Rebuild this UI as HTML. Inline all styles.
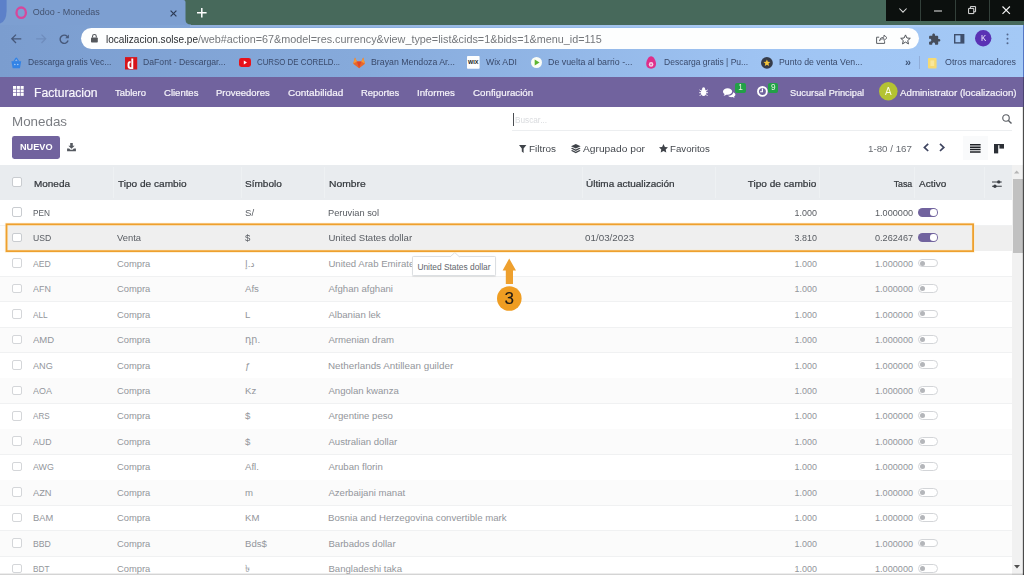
<!DOCTYPE html>
<html lang="es"><head><meta charset="utf-8"><title>Odoo - Monedas</title>
<style>html,body{margin:0;padding:0}html{width:1024px;height:575px;overflow:hidden}body{filter:blur(0.4px);width:1024px;height:575px;overflow:hidden;position:relative;background:#fff;font-family:"Liberation Sans","DejaVu Sans",sans-serif;}svg{display:block;overflow:visible}</style></head>
<body>
<div style="position:absolute;left:0px;top:0px;width:1024px;height:25px;background:#47695b;"></div>
<div style="position:absolute;left:0px;top:24.5px;width:1024px;height:52px;background:linear-gradient(90deg,#7b9dcf 0%,#86aadb 35%,#9fc4f3 75%,#a4c9f6 100%);"></div>
<div style="position:absolute;left:190px;top:25px;width:834px;height:2px;background:rgba(255,255,255,0.13);"></div>
<svg style="position:absolute;left:0px;top:0px;" width="192" height="25" viewBox="0 0 192 25"><path d="M0 0H183.5Q185.5 0 185.5 2V19.5Q185.5 24.6 191 24.6V25H0Z" fill="#7d9fd1"/><path d="M0 0H6.6V11Q6.4 21.5 0 23.6Z" fill="#5c80c9"/></svg>
<svg style="position:absolute;left:14.5px;top:5.5px;" width="12.5" height="13.5" viewBox="0 0 12.5 13.5"><ellipse cx="6.2" cy="6.7" rx="4.7" ry="5.2" fill="none" stroke="#d6489c" stroke-width="2.3"/></svg>
<svg style="position:absolute;left:170px;top:9.5px;" width="7" height="7" viewBox="0 0 7 7"><path d="M0.6 0.6L6.4 6.4M6.4 0.6L0.6 6.4" stroke="#2d3b55" stroke-width="1.2" fill="none"/></svg>
<svg style="position:absolute;left:197.3px;top:7.7px;" width="9.6" height="9.6" viewBox="0 0 9.6 9.6"><path d="M4.8 0V9.6M0 4.8H9.6" stroke="#fff" stroke-width="1.5" fill="none"/></svg>
<div style="position:absolute;left:886px;top:0px;width:138px;height:21px;background:#0c100e;"></div>
<div style="position:absolute;left:920.3px;top:0px;width:1px;height:21px;background:#33403a;"></div>
<div style="position:absolute;left:954.6px;top:0px;width:1px;height:21px;background:#33403a;"></div>
<div style="position:absolute;left:989px;top:0px;width:1px;height:21px;background:#33403a;"></div>
<svg style="position:absolute;left:899px;top:8.2px;" width="8" height="5" viewBox="0 0 8 5"><path d="M0.4 0.5L4 4.2L7.6 0.5" stroke="#dcdcdc" stroke-width="1.05" fill="none"/></svg>
<svg style="position:absolute;left:934px;top:10px;" width="8" height="2" viewBox="0 0 8 2"><path d="M0 1H8" stroke="#e2e2e2" stroke-width="1.05"/></svg>
<svg style="position:absolute;left:968px;top:6.3px;" width="8.2" height="8.2" viewBox="0 0 8.2 8.2"><path d="M0.6 2.4H5.8V7.6H0.6ZM2.4 2.4V0.6H7.6V5.8H5.8" stroke="#e2e2e2" stroke-width="1" fill="none"/></svg>
<svg style="position:absolute;left:1002.4px;top:6.4px;" width="8.4" height="8.4" viewBox="0 0 8.4 8.4"><path d="M0.5 0.5L7.9 7.9M7.9 0.5L0.5 7.9" stroke="#f4f4f4" stroke-width="1.15" fill="none"/></svg>
<svg style="position:absolute;left:11px;top:34px;" width="10.5" height="9.6" viewBox="0 0 10.5 9.6"><path d="M10.3 4.8H1M5 0.6L0.8 4.8L5 9" stroke="#46587a" stroke-width="1.3" fill="none"/></svg>
<svg style="position:absolute;left:35.5px;top:34px;" width="10.5" height="9.6" viewBox="0 0 10.5 9.6"><path d="M0.2 4.8H9.5M5.5 0.6L9.7 4.8L5.5 9" stroke="#6f8dbd" stroke-width="1.3" fill="none"/></svg>
<svg style="position:absolute;left:59px;top:33.6px;" width="10.6" height="10.6" viewBox="0 0 10.6 10.6"><path d="M9.1 6.6A4.1 4.1 0 1 1 8.2 2.4" stroke="#46587a" stroke-width="1.4" fill="none"/><path d="M9.9 0.6V4.3H6.2Z" fill="#46587a"/></svg>
<div style="position:absolute;left:80.5px;top:28px;width:838.5px;height:20.8px;background:#fdfefe;border-radius:10.4px;"></div>
<svg style="position:absolute;left:90.8px;top:34.2px;" width="6.8" height="8.6" viewBox="0 0 6.8 8.6"><rect x="0" y="3.4" width="6.8" height="5.2" rx="0.8" fill="#55585c"/><path d="M1.5 3.6V2.4A1.9 1.9 0 0 1 5.3 2.4V3.6" stroke="#55585c" stroke-width="1.1" fill="none"/></svg>
<svg style="position:absolute;left:876px;top:34.3px;" width="11.5" height="10" viewBox="0 0 11.5 10"><path d="M3.2 3.2H0.6V9.4H8.6V7.2" stroke="#5b5f64" stroke-width="1" fill="none"/><path d="M3.4 6.8Q3.8 3.2 8 3.1V1L11 3.8L8 6.6V4.6Q5 4.6 3.4 6.8Z" stroke="#5b5f64" stroke-width="0.9" fill="none"/></svg>
<svg style="position:absolute;left:900px;top:34px;" width="11" height="10.5" viewBox="0 0 11 10.5"><path d="M5.5 0.9L6.9 4L10.3 4.3L7.7 6.6L8.5 9.9L5.5 8.1L2.5 9.9L3.3 6.6L0.7 4.3L4.1 4Z" stroke="#4f5358" stroke-width="1" fill="none" stroke-linejoin="round"/></svg>
<svg style="position:absolute;left:928.3px;top:33.4px;" width="12.9" height="12.9" viewBox="0 0 24 24"><path d="M20.5 11H19V7c0-1.1-.9-2-2-2h-4V3.500C13 2.120 11.880 1 10.500 1S8 2.120 8 3.500V5H4c-1.100 0-1.990.9-1.990 2v3.800H3.500c1.490 0 2.700 1.210 2.700 2.700s-1.210 2.700-2.700 2.700H2V20c0 1.100.9 2 2 2h3.800v-1.500c0-1.490 1.210-2.700 2.700-2.700 1.490 0 2.700 1.210 2.700 2.700V22H17c1.100 0 2-.9 2-2v-4h1.500c1.380 0 2.500-1.120 2.500-2.500S21.880 11 20.500 11z" fill="#454c5a"/></svg>
<svg style="position:absolute;left:954px;top:34px;" width="10.4" height="9.6" viewBox="0 0 10.4 9.6"><rect x="0.7" y="0.7" width="9" height="8.2" stroke="#3f4f6c" stroke-width="1.4" fill="none"/><rect x="6.4" y="0.7" width="3.3" height="8.2" fill="#3f4f6c"/></svg>
<svg style="position:absolute;left:975px;top:30.2px;" width="16.4" height="16.4" viewBox="0 0 16.4 16.4"><circle cx="8.2" cy="8.2" r="8.2" fill="#5a31b4"/></svg>
<svg style="position:absolute;left:1006.2px;top:33px;" width="3" height="12" viewBox="0 0 3 12"><circle cx="1.5" cy="1.4" r="1" fill="#54678c"/><circle cx="1.5" cy="5.8" r="1" fill="#54678c"/><circle cx="1.5" cy="10.2" r="1" fill="#54678c"/></svg>
<svg style="position:absolute;left:11px;top:56.8px;" width="10.6" height="11.4" viewBox="0 0 10.8 11.4"><path d="M0.4 4.2H10.4L9.2 10.8Q9.1 11.4 8.5 11.4H2.3Q1.7 11.4 1.6 10.8Z" fill="#3283e6"/><path d="M2.2 4.6L4.6 0.9Q5.4 0 6.2 0.9L8.6 4.6Z" fill="#3283e6"/><path d="M4.1 4L5.4 2L6.7 4Z" fill="#8fb6ea"/><circle cx="3.9" cy="7.6" r="0.8" fill="#a9cbf5"/><circle cx="6.9" cy="7.6" r="0.8" fill="#a9cbf5"/></svg>
<svg style="position:absolute;left:124.8px;top:56.5px;" width="12.2" height="12.6" viewBox="0 0 12.2 12.4"><rect width="12.2" height="12.4" fill="#d7141a"/><path d="M7.3 1.5V11H5.6Q3.5 11 3.5 8.9V6.9Q3.5 4.9 5.6 4.9" stroke="#fff" stroke-width="1.9" fill="none"/></svg>
<svg style="position:absolute;left:238.8px;top:58px;" width="12" height="9" viewBox="0 0 12 9"><rect width="12" height="9" rx="2.4" fill="#e8121a"/><path d="M4.8 2.5L8 4.5L4.8 6.5Z" fill="#fff"/></svg>
<svg style="position:absolute;left:353px;top:57px;" width="12.2" height="11.2" viewBox="0 0 12.2 11.2"><path d="M6.1 11.2L0.2 6.8L2 0.4L3.9 4.6H8.3L10.2 0.4L12 6.8Z" fill="#e8662c"/><path d="M6.1 11.2L3.9 4.6H8.3Z" fill="#e2432a"/><path d="M0.2 6.8L2 0.4L3.9 4.6ZM12 6.8L10.2 0.4L8.3 4.6Z" fill="#f39a3a"/></svg>
<svg style="position:absolute;left:467.4px;top:56.2px;" width="12.6" height="12.8" viewBox="0 0 12.6 12.8"><rect width="12.6" height="12.8" rx="0.8" fill="#fdfefe"/><text x="6.3" y="8.3" font-size="5" font-weight="700" text-anchor="middle" fill="#161616" font-family="Liberation Sans,sans-serif" textLength="10.4" lengthAdjust="spacingAndGlyphs">WIX</text></svg>
<svg style="position:absolute;left:530.5px;top:57px;" width="11" height="11" viewBox="0 0 11 11"><circle cx="5.5" cy="5.5" r="5.5" fill="#fbfdf6"/><path d="M3.7 2.6L8.6 5.5L3.7 8.4Z" fill="#5cb531"/></svg>
<svg style="position:absolute;left:646.2px;top:56px;" width="10.2" height="12.8" viewBox="0 0 10.2 12.8"><path d="M5.1 0.3C7.9 0.3 10 4.9 10 8.1C10 11 8 12.7 5.1 12.7C2.2 12.7 0.2 11 0.2 8.1C0.2 4.9 2.3 0.3 5.1 0.3Z" fill="#df2e8a"/><circle cx="5.1" cy="8.4" r="2.3" fill="#f6cfe4"/><circle cx="5.1" cy="8.4" r="0.9" fill="#e45aa2"/></svg>
<svg style="position:absolute;left:760.8px;top:56.6px;" width="11.8" height="11.8" viewBox="0 0 11.8 11.8"><circle cx="5.9" cy="5.9" r="5.9" fill="#363c4a"/><path d="M5.9 2.5L6.9 4.8L9.3 5L7.5 6.6L8 9L5.9 7.7L3.8 9L4.3 6.6L2.5 5L4.9 4.8Z" fill="#f4c53a"/></svg>
<div style="position:absolute;left:919px;top:56px;width:1px;height:12.5px;background:#90add9;"></div>
<svg style="position:absolute;left:928.4px;top:57.5px;" width="8.6" height="10.4" viewBox="0 0 8.6 10.4"><rect width="8.6" height="10.4" rx="1" fill="#f6da73"/><rect x="2.4" y="2.4" width="3.8" height="5.6" fill="#f9e79c"/></svg>
<div style="position:absolute;left:0px;top:76.6px;width:1024px;height:30.1px;background:#71639e;"></div>
<svg style="position:absolute;left:13px;top:86.3px;" width="10.8" height="10" viewBox="0 0 10.8 10"><rect x="0.0" y="0.0" width="3.1" height="2.9" fill="#fff"/><rect x="3.8" y="0.0" width="3.1" height="2.9" fill="#fff"/><rect x="7.6" y="0.0" width="3.1" height="2.9" fill="#fff"/><rect x="0.0" y="3.5" width="3.1" height="2.9" fill="#fff"/><rect x="3.8" y="3.5" width="3.1" height="2.9" fill="#fff"/><rect x="7.6" y="3.5" width="3.1" height="2.9" fill="#fff"/><rect x="0.0" y="7.0" width="3.1" height="2.9" fill="#fff"/><rect x="3.8" y="7.0" width="3.1" height="2.9" fill="#fff"/><rect x="7.6" y="7.0" width="3.1" height="2.9" fill="#fff"/></svg>
<svg style="position:absolute;left:699.4px;top:86.8px;" width="9.2" height="9.4" viewBox="0 0 8.6 9.2"><ellipse cx="4.3" cy="5.4" rx="2.6" ry="3.4" fill="#fff"/><circle cx="4.3" cy="1.7" r="1.5" fill="#fff"/><path d="M0.3 2.8L2 4M8.3 2.8L6.6 4M0 5.6H8.6M0.4 8.8L2 7.2M8.2 8.8L6.6 7.2" stroke="#fff" stroke-width="0.9"/></svg>
<svg style="position:absolute;left:722.6px;top:87.6px;" width="12.4" height="9.8" viewBox="0 0 12.4 9.8"><path d="M4.6 0.2C7.1 0.2 9.2 1.6 9.2 3.5C9.2 5.4 7.1 6.8 4.6 6.8C4.1 6.8 3.7 6.8 3.3 6.7C2.5 7.4 1.5 7.7 0.5 7.8C1.1 7.2 1.4 6.6 1.5 6C0.6 5.4 0 4.5 0 3.5C0 1.6 2.1 0.2 4.6 0.2Z" fill="#fff"/><path d="M10.2 4.2C11.5 4.7 12.4 5.6 12.4 6.6C12.4 7.5 11.8 8.2 11 8.7C11.1 9.1 11.4 9.5 11.9 9.8C11 9.8 10.1 9.5 9.5 9.1C9.1 9.2 8.7 9.2 8.3 9.2C6.9 9.2 5.7 8.7 5 7.8C8 7.7 10.3 6.1 10.2 4.2Z" fill="#fff"/></svg>
<div style="position:absolute;left:735.3px;top:82.6px;width:10.4px;height:10.8px;background:#22a047;border-radius:2px;"></div>
<svg style="position:absolute;left:756.8px;top:86.2px;" width="10.8" height="10.8" viewBox="0 0 10 10"><circle cx="5" cy="5" r="4.1" stroke="#fff" stroke-width="1.7" fill="none"/><path d="M5 2.4V5.3H2.9" stroke="#fff" stroke-width="1.1" fill="none"/></svg>
<div style="position:absolute;left:768px;top:82.6px;width:10.4px;height:10.8px;background:#22a047;border-radius:2px;"></div>
<svg style="position:absolute;left:879px;top:82.4px;" width="18.6" height="18.6" viewBox="0 0 17.2 17.2"><circle cx="8.6" cy="8.6" r="8.6" fill="#b4c332"/></svg>
<div style="position:absolute;left:512px;top:129.8px;width:500px;height:1px;background:#eceef0;"></div>
<div style="position:absolute;left:512.6px;top:112.6px;width:1px;height:13.6px;background:#4a4d52;"></div>
<svg style="position:absolute;left:1002px;top:114.4px;" width="10" height="10" viewBox="0 0 10 10"><circle cx="4" cy="4" r="3.25" stroke="#5a5e64" stroke-width="1.15" fill="none"/><path d="M6.4 6.4L9.5 9.5" stroke="#5a5e64" stroke-width="1.4"/></svg>
<div style="position:absolute;left:12px;top:136.2px;width:47.6px;height:22.8px;background:#71639e;border-radius:2.4px;"></div>
<svg style="position:absolute;left:67.4px;top:143px;" width="9" height="8.3" viewBox="0 0 9.6 9"><path d="M3.4 0H6.2V3H8.2L4.8 6.3L1.4 3H3.4Z" fill="#555960"/><path d="M0 6H2.3L3.6 7.3H6L7.3 6H9.6V9H0Z" fill="#555960"/></svg>
<svg style="position:absolute;left:519.4px;top:144.6px;" width="7.4" height="8" viewBox="0 0 7.4 8"><path d="M0 0H7.4L4.6 3.6V8L2.8 6.6V3.6Z" fill="#3f4349"/></svg>
<svg style="position:absolute;left:570.6px;top:143.8px;" width="9.6" height="9.6" viewBox="0 0 9.6 9.6"><path d="M4.8 0L9.6 2.2L4.8 4.4L0 2.2Z" fill="#3f4349"/><path d="M1.2 3.8L0 4.5L4.8 6.9L9.6 4.5L8.4 3.8L4.8 5.5Z" fill="#3f4349"/><path d="M1.2 6.1L0 6.8L4.8 9.3L9.6 6.8L8.4 6.1L4.8 7.8Z" fill="#3f4349"/></svg>
<svg style="position:absolute;left:658.8px;top:144px;" width="9" height="8.6" viewBox="0 0 9 8.6"><path d="M4.5 0L5.9 2.9L9 3.3L6.7 5.4L7.3 8.6L4.5 7.1L1.7 8.6L2.3 5.4L0 3.3L3.1 2.9Z" fill="#3f4349"/></svg>
<svg style="position:absolute;left:923px;top:143px;" width="6.2" height="8.8" viewBox="0 0 6.2 8.8"><path d="M5.2 0.8L1.4 4.4L5.2 8" stroke="#3f4560" stroke-width="1.7" fill="none"/></svg>
<svg style="position:absolute;left:938.8px;top:143px;" width="6.2" height="8.8" viewBox="0 0 6.2 8.8"><path d="M1 0.8L4.8 4.4L1 8" stroke="#3f4560" stroke-width="1.7" fill="none"/></svg>
<div style="position:absolute;left:963px;top:136.2px;width:25px;height:23.6px;background:#f9fafb;"></div>
<svg style="position:absolute;left:970px;top:144px;" width="10.6" height="8.8" viewBox="0 0 10.6 8.8"><path d="M0 0.8H10.6M0 3.2H10.6M0 5.6H10.6M0 8H10.6" stroke="#1e2126" stroke-width="1.5"/></svg>
<svg style="position:absolute;left:994.2px;top:143.6px;" width="10" height="9.4" viewBox="0 0 10 9.4"><rect x="0" y="0" width="4.2" height="9.4" fill="#2c3036"/><rect x="5.4" y="0" width="4.6" height="4.6" fill="#2c3036"/><rect x="0" y="0" width="10" height="1.2" fill="#2c3036"/></svg>
<div style="position:absolute;left:0px;top:165px;width:1011.5px;height:35.3px;background:#e9ecef;"></div>
<div style="position:absolute;left:113px;top:167px;width:1px;height:31px;background:#eef1f3;"></div>
<div style="position:absolute;left:241px;top:167px;width:1px;height:31px;background:#eef1f3;"></div>
<div style="position:absolute;left:324px;top:167px;width:1px;height:31px;background:#eef1f3;"></div>
<div style="position:absolute;left:582px;top:167px;width:1px;height:31px;background:#eef1f3;"></div>
<div style="position:absolute;left:714.5px;top:167px;width:1px;height:31px;background:#eef1f3;"></div>
<div style="position:absolute;left:819px;top:167px;width:1px;height:31px;background:#eef1f3;"></div>
<div style="position:absolute;left:914px;top:167px;width:1px;height:31px;background:#eef1f3;"></div>
<div style="position:absolute;left:983.5px;top:167px;width:1px;height:31px;background:#eef1f3;"></div>
<div style="position:absolute;left:11.8px;top:177px;width:9.8px;height:9.6px;background:#fff;box-sizing:border-box;border:1px solid #c9ccd0;border-radius:2px;"></div>
<svg style="position:absolute;left:991.8px;top:179.5px;" width="9.8" height="8.2" viewBox="0 0 10 8.4"><path d="M0 2H10M0 6.4H10" stroke="#3a3e44" stroke-width="1.1"/><circle cx="6.9" cy="2" r="1.7" fill="#3a3e44"/><circle cx="3" cy="6.4" r="1.7" fill="#3a3e44"/></svg>
<div style="position:absolute;left:0px;top:200.3px;width:1011.5px;height:25.45px;background:#ffffff;"></div>
<div style="position:absolute;left:0px;top:225.05px;width:1011.5px;height:1px;background:#f0f1f2;"></div>
<div style="position:absolute;left:11.8px;top:207.4px;width:9.8px;height:9.6px;background:#fff;box-sizing:border-box;border:1px solid #c9ccd0;border-radius:2px;"></div>
<div style="position:absolute;left:918px;top:207.7px;width:20px;height:9.2px;background:#71639e;border-radius:4.6px;"></div>
<div style="position:absolute;left:930.4px;top:209.0px;width:6.4px;height:6.6px;background:#fff;border-radius:50%;"></div>
<div style="position:absolute;left:0px;top:225.75px;width:1011.5px;height:25.45px;background:#efefef;"></div>
<div style="position:absolute;left:0px;top:250.5px;width:1011.5px;height:1px;background:#e8e8e8;"></div>
<div style="position:absolute;left:0px;top:225.75px;width:5.5px;height:25.45px;background:#fdfdfd;"></div>
<div style="position:absolute;left:11.8px;top:232.85px;width:9.8px;height:9.6px;background:#fff;box-sizing:border-box;border:1px solid #c9ccd0;border-radius:2px;"></div>
<div style="position:absolute;left:918px;top:233.15px;width:20px;height:9.2px;background:#71639e;border-radius:4.6px;"></div>
<div style="position:absolute;left:930.4px;top:234.45px;width:6.4px;height:6.6px;background:#fff;border-radius:50%;"></div>
<div style="position:absolute;left:0px;top:251.2px;width:1011.5px;height:25.45px;background:#ffffff;"></div>
<div style="position:absolute;left:0px;top:275.95px;width:1011.5px;height:1px;background:#f0f1f2;"></div>
<div style="position:absolute;left:11.8px;top:258.3px;width:9.8px;height:9.6px;background:#fff;box-sizing:border-box;border:1px solid #d4d6d9;border-radius:2px;"></div>
<div style="position:absolute;left:918.2px;top:258.6px;width:19.4px;height:8.9px;background:#fff;box-sizing:border-box;border:1px solid #d3d5d8;border-radius:4.45px;"></div>
<div style="position:absolute;left:920.4px;top:260.55px;width:5px;height:5px;background:#b4b6ba;border-radius:50%;"></div>
<div style="position:absolute;left:0px;top:276.65px;width:1011.5px;height:25.45px;background:#fbfbfb;"></div>
<div style="position:absolute;left:0px;top:301.4px;width:1011.5px;height:1px;background:#f0f1f2;"></div>
<div style="position:absolute;left:11.8px;top:283.75px;width:9.8px;height:9.6px;background:#fff;box-sizing:border-box;border:1px solid #d4d6d9;border-radius:2px;"></div>
<div style="position:absolute;left:918.2px;top:284.05px;width:19.4px;height:8.9px;background:#fff;box-sizing:border-box;border:1px solid #d3d5d8;border-radius:4.45px;"></div>
<div style="position:absolute;left:920.4px;top:286.0px;width:5px;height:5px;background:#b4b6ba;border-radius:50%;"></div>
<div style="position:absolute;left:0px;top:302.1px;width:1011.5px;height:25.45px;background:#ffffff;"></div>
<div style="position:absolute;left:0px;top:326.85px;width:1011.5px;height:1px;background:#f0f1f2;"></div>
<div style="position:absolute;left:11.8px;top:309.2px;width:9.8px;height:9.6px;background:#fff;box-sizing:border-box;border:1px solid #d4d6d9;border-radius:2px;"></div>
<div style="position:absolute;left:918.2px;top:309.5px;width:19.4px;height:8.9px;background:#fff;box-sizing:border-box;border:1px solid #d3d5d8;border-radius:4.45px;"></div>
<div style="position:absolute;left:920.4px;top:311.45px;width:5px;height:5px;background:#b4b6ba;border-radius:50%;"></div>
<div style="position:absolute;left:0px;top:327.55px;width:1011.5px;height:25.45px;background:#fbfbfb;"></div>
<div style="position:absolute;left:0px;top:352.3px;width:1011.5px;height:1px;background:#f0f1f2;"></div>
<div style="position:absolute;left:11.8px;top:334.65px;width:9.8px;height:9.6px;background:#fff;box-sizing:border-box;border:1px solid #d4d6d9;border-radius:2px;"></div>
<div style="position:absolute;left:918.2px;top:334.95px;width:19.4px;height:8.9px;background:#fff;box-sizing:border-box;border:1px solid #d3d5d8;border-radius:4.45px;"></div>
<div style="position:absolute;left:920.4px;top:336.9px;width:5px;height:5px;background:#b4b6ba;border-radius:50%;"></div>
<div style="position:absolute;left:0px;top:353.0px;width:1011.5px;height:25.45px;background:#ffffff;"></div>
<div style="position:absolute;left:0px;top:377.75px;width:1011.5px;height:1px;background:#f0f1f2;"></div>
<div style="position:absolute;left:11.8px;top:360.1px;width:9.8px;height:9.6px;background:#fff;box-sizing:border-box;border:1px solid #d4d6d9;border-radius:2px;"></div>
<div style="position:absolute;left:918.2px;top:360.4px;width:19.4px;height:8.9px;background:#fff;box-sizing:border-box;border:1px solid #d3d5d8;border-radius:4.45px;"></div>
<div style="position:absolute;left:920.4px;top:362.35px;width:5px;height:5px;background:#b4b6ba;border-radius:50%;"></div>
<div style="position:absolute;left:0px;top:378.45px;width:1011.5px;height:25.45px;background:#fbfbfb;"></div>
<div style="position:absolute;left:0px;top:403.2px;width:1011.5px;height:1px;background:#f0f1f2;"></div>
<div style="position:absolute;left:11.8px;top:385.55px;width:9.8px;height:9.6px;background:#fff;box-sizing:border-box;border:1px solid #d4d6d9;border-radius:2px;"></div>
<div style="position:absolute;left:918.2px;top:385.85px;width:19.4px;height:8.9px;background:#fff;box-sizing:border-box;border:1px solid #d3d5d8;border-radius:4.45px;"></div>
<div style="position:absolute;left:920.4px;top:387.8px;width:5px;height:5px;background:#b4b6ba;border-radius:50%;"></div>
<div style="position:absolute;left:0px;top:403.9px;width:1011.5px;height:25.45px;background:#ffffff;"></div>
<div style="position:absolute;left:0px;top:428.65px;width:1011.5px;height:1px;background:#f0f1f2;"></div>
<div style="position:absolute;left:11.8px;top:411.0px;width:9.8px;height:9.6px;background:#fff;box-sizing:border-box;border:1px solid #d4d6d9;border-radius:2px;"></div>
<div style="position:absolute;left:918.2px;top:411.3px;width:19.4px;height:8.9px;background:#fff;box-sizing:border-box;border:1px solid #d3d5d8;border-radius:4.45px;"></div>
<div style="position:absolute;left:920.4px;top:413.25px;width:5px;height:5px;background:#b4b6ba;border-radius:50%;"></div>
<div style="position:absolute;left:0px;top:429.35px;width:1011.5px;height:25.45px;background:#fbfbfb;"></div>
<div style="position:absolute;left:0px;top:454.1px;width:1011.5px;height:1px;background:#f0f1f2;"></div>
<div style="position:absolute;left:11.8px;top:436.45px;width:9.8px;height:9.6px;background:#fff;box-sizing:border-box;border:1px solid #d4d6d9;border-radius:2px;"></div>
<div style="position:absolute;left:918.2px;top:436.75px;width:19.4px;height:8.9px;background:#fff;box-sizing:border-box;border:1px solid #d3d5d8;border-radius:4.45px;"></div>
<div style="position:absolute;left:920.4px;top:438.7px;width:5px;height:5px;background:#b4b6ba;border-radius:50%;"></div>
<div style="position:absolute;left:0px;top:454.8px;width:1011.5px;height:25.45px;background:#ffffff;"></div>
<div style="position:absolute;left:0px;top:479.55px;width:1011.5px;height:1px;background:#f0f1f2;"></div>
<div style="position:absolute;left:11.8px;top:461.9px;width:9.8px;height:9.6px;background:#fff;box-sizing:border-box;border:1px solid #d4d6d9;border-radius:2px;"></div>
<div style="position:absolute;left:918.2px;top:462.2px;width:19.4px;height:8.9px;background:#fff;box-sizing:border-box;border:1px solid #d3d5d8;border-radius:4.45px;"></div>
<div style="position:absolute;left:920.4px;top:464.15px;width:5px;height:5px;background:#b4b6ba;border-radius:50%;"></div>
<div style="position:absolute;left:0px;top:480.25px;width:1011.5px;height:25.45px;background:#fbfbfb;"></div>
<div style="position:absolute;left:0px;top:505.0px;width:1011.5px;height:1px;background:#f0f1f2;"></div>
<div style="position:absolute;left:11.8px;top:487.35px;width:9.8px;height:9.6px;background:#fff;box-sizing:border-box;border:1px solid #d4d6d9;border-radius:2px;"></div>
<div style="position:absolute;left:918.2px;top:487.65px;width:19.4px;height:8.9px;background:#fff;box-sizing:border-box;border:1px solid #d3d5d8;border-radius:4.45px;"></div>
<div style="position:absolute;left:920.4px;top:489.6px;width:5px;height:5px;background:#b4b6ba;border-radius:50%;"></div>
<div style="position:absolute;left:0px;top:505.7px;width:1011.5px;height:25.45px;background:#ffffff;"></div>
<div style="position:absolute;left:0px;top:530.45px;width:1011.5px;height:1px;background:#f0f1f2;"></div>
<div style="position:absolute;left:11.8px;top:512.8px;width:9.8px;height:9.6px;background:#fff;box-sizing:border-box;border:1px solid #d4d6d9;border-radius:2px;"></div>
<div style="position:absolute;left:918.2px;top:513.1px;width:19.4px;height:8.9px;background:#fff;box-sizing:border-box;border:1px solid #d3d5d8;border-radius:4.45px;"></div>
<div style="position:absolute;left:920.4px;top:515.05px;width:5px;height:5px;background:#b4b6ba;border-radius:50%;"></div>
<div style="position:absolute;left:0px;top:531.15px;width:1011.5px;height:25.45px;background:#fbfbfb;"></div>
<div style="position:absolute;left:0px;top:555.9px;width:1011.5px;height:1px;background:#f0f1f2;"></div>
<div style="position:absolute;left:11.8px;top:538.25px;width:9.8px;height:9.6px;background:#fff;box-sizing:border-box;border:1px solid #d4d6d9;border-radius:2px;"></div>
<div style="position:absolute;left:918.2px;top:538.55px;width:19.4px;height:8.9px;background:#fff;box-sizing:border-box;border:1px solid #d3d5d8;border-radius:4.45px;"></div>
<div style="position:absolute;left:920.4px;top:540.5px;width:5px;height:5px;background:#b4b6ba;border-radius:50%;"></div>
<div style="position:absolute;left:0px;top:556.6px;width:1011.5px;height:18.4px;background:#ffffff;"></div>
<div style="position:absolute;left:11.8px;top:563.7px;width:9.8px;height:9.6px;background:#fff;box-sizing:border-box;border:1px solid #d4d6d9;border-radius:2px;"></div>
<div style="position:absolute;left:918.2px;top:564.0px;width:19.4px;height:8.9px;background:#fff;box-sizing:border-box;border:1px solid #d3d5d8;border-radius:4.45px;"></div>
<div style="position:absolute;left:920.4px;top:565.95px;width:5px;height:5px;background:#b4b6ba;border-radius:50%;"></div>
<div style="position:absolute;left:1011.5px;top:165px;width:11px;height:410px;background:#f1f1f1;"></div>
<div style="position:absolute;left:1013px;top:179px;width:9.5px;height:74px;background:#c1c1c1;"></div>
<svg style="position:absolute;left:1014.4px;top:170px;" width="5.4" height="3.4" viewBox="0 0 5.4 3.4"><path d="M0 3.4L2.7 0.4L5.4 3.4Z" fill="#b5b5b5"/></svg>
<svg style="position:absolute;left:1014px;top:564.6px;" width="6" height="3.6" viewBox="0 0 6 3.6"><path d="M0 0L3 3.6L6 0Z" fill="#505050"/></svg>
<div style="position:absolute;left:1023px;top:77px;width:1px;height:30px;background:#4a4270;"></div>
<div style="position:absolute;left:1023px;top:107px;width:1px;height:468px;background:#4b4b4b;"></div>
<div style="position:absolute;left:1022px;top:107px;width:1px;height:468px;background:rgba(0,0,0,0.10);"></div>
<div style="position:absolute;left:1023px;top:25px;width:1px;height:52px;background:#5577c4;"></div>
<div style="position:absolute;left:0px;top:573px;width:1024px;height:1px;background:rgba(0,0,0,0.07);"></div>
<div style="position:absolute;left:0px;top:574px;width:1024px;height:1px;background:rgba(0,0,0,0.17);"></div>
<span style="position:absolute;top:7.98px;font-size:9px;line-height:9px;color:#445370;white-space:nowrap;left:32.8px;transform-origin:0 50%;">Odoo - Monedas</span>
<span style="position:absolute;top:33.61px;font-size:10.5px;line-height:10.5px;color:#2a2d31;white-space:nowrap;left:106.2px;transform-origin:0 50%;transform:scaleX(0.955);">localizacion.solse.pe</span>
<span style="position:absolute;top:33.61px;font-size:10.5px;line-height:10.5px;color:#74777b;white-space:nowrap;left:198.3px;transform-origin:0 50%;transform:scaleX(1.030);">/web#action=67&amp;model=res.currency&amp;view_type=list&amp;cids=1&amp;bids=1&amp;menu_id=115</span>
<span style="position:absolute;top:33.98px;font-size:9px;line-height:9px;color:#f4f0ff;white-space:nowrap;left:980.6px;transform-origin:0 50%;transform:scaleX(0.864);">K</span>
<span style="position:absolute;top:58.48px;font-size:9px;line-height:9px;color:#3a4a6b;white-space:nowrap;left:28.3px;transform-origin:0 50%;transform:scaleX(0.947);">Descarga gratis Vec...</span>
<span style="position:absolute;top:58.48px;font-size:9px;line-height:9px;color:#3a4a6b;white-space:nowrap;left:143.2px;transform-origin:0 50%;transform:scaleX(0.960);">DaFont - Descargar...</span>
<span style="position:absolute;top:58.48px;font-size:9px;line-height:9px;color:#3a4a6b;white-space:nowrap;left:257px;transform-origin:0 50%;transform:scaleX(0.874);">CURSO DE CORELD...</span>
<span style="position:absolute;top:58.48px;font-size:9px;line-height:9px;color:#3a4a6b;white-space:nowrap;left:371.2px;transform-origin:0 50%;transform:scaleX(0.974);">Brayan Mendoza Ar...</span>
<span style="position:absolute;top:58.48px;font-size:9px;line-height:9px;color:#3a4a6b;white-space:nowrap;left:486.2px;transform-origin:0 50%;transform:scaleX(0.962);">Wix ADI</span>
<span style="position:absolute;top:58.48px;font-size:9px;line-height:9px;color:#3a4a6b;white-space:nowrap;left:548px;transform-origin:0 50%;transform:scaleX(0.982);">De vuelta al barrio -...</span>
<span style="position:absolute;top:58.48px;font-size:9px;line-height:9px;color:#3a4a6b;white-space:nowrap;left:663.8px;transform-origin:0 50%;transform:scaleX(0.947);">Descarga gratis | Pu...</span>
<span style="position:absolute;top:58.48px;font-size:9px;line-height:9px;color:#3a4a6b;white-space:nowrap;left:778.8px;transform-origin:0 50%;transform:scaleX(0.969);">Punto de venta Ven...</span>
<span style="position:absolute;top:57.73px;font-size:10px;line-height:10px;color:#3f5578;white-space:nowrap;font-weight:700;left:905px;transform-origin:0 50%;transform:scaleX(1.079);">»</span>
<span style="position:absolute;top:58.48px;font-size:9px;line-height:9px;color:#3a4a6b;white-space:nowrap;left:945px;transform-origin:0 50%;transform:scaleX(0.986);">Otros marcadores</span>
<span style="position:absolute;top:86.50px;font-size:12.4px;line-height:12.4px;color:#f8f6fc;white-space:nowrap;left:33.6px;transform-origin:0 50%;transform:scaleX(0.982);-webkit-text-stroke:0.2px #f8f6fc;">Facturacion</span>
<span style="position:absolute;top:87.70px;font-size:9.8px;line-height:9.8px;color:#f6f4fa;white-space:nowrap;left:115.4px;transform-origin:0 50%;transform:scaleX(0.965);-webkit-text-stroke:0.2px #f6f4fa;">Tablero</span>
<span style="position:absolute;top:87.70px;font-size:9.8px;line-height:9.8px;color:#f6f4fa;white-space:nowrap;left:164.4px;transform-origin:0 50%;transform:scaleX(0.972);-webkit-text-stroke:0.2px #f6f4fa;">Clientes</span>
<span style="position:absolute;top:87.70px;font-size:9.8px;line-height:9.8px;color:#f6f4fa;white-space:nowrap;left:216.4px;transform-origin:0 50%;transform:scaleX(0.968);-webkit-text-stroke:0.2px #f6f4fa;">Proveedores</span>
<span style="position:absolute;top:87.70px;font-size:9.8px;line-height:9.8px;color:#f6f4fa;white-space:nowrap;left:287.8px;transform-origin:0 50%;transform:scaleX(1.017);-webkit-text-stroke:0.2px #f6f4fa;">Contabilidad</span>
<span style="position:absolute;top:87.70px;font-size:9.8px;line-height:9.8px;color:#f6f4fa;white-space:nowrap;left:360.8px;transform-origin:0 50%;transform:scaleX(0.961);-webkit-text-stroke:0.2px #f6f4fa;">Reportes</span>
<span style="position:absolute;top:87.70px;font-size:9.8px;line-height:9.8px;color:#f6f4fa;white-space:nowrap;left:417px;transform-origin:0 50%;transform:scaleX(0.991);-webkit-text-stroke:0.2px #f6f4fa;">Informes</span>
<span style="position:absolute;top:87.70px;font-size:9.8px;line-height:9.8px;color:#f6f4fa;white-space:nowrap;left:472.6px;transform-origin:0 50%;transform:scaleX(0.996);-webkit-text-stroke:0.2px #f6f4fa;">Configuración</span>
<span style="position:absolute;top:83.86px;font-size:8.2px;line-height:8.2px;color:#e4f7dc;white-space:nowrap;left:738.3px;transform-origin:0 50%;">1</span>
<span style="position:absolute;top:83.86px;font-size:8.2px;line-height:8.2px;color:#e4f7dc;white-space:nowrap;left:770.9px;transform-origin:0 50%;">9</span>
<span style="position:absolute;top:87.70px;font-size:9.8px;line-height:9.8px;color:#f6f4fa;white-space:nowrap;left:790.4px;transform-origin:0 50%;transform:scaleX(0.946);-webkit-text-stroke:0.2px #f6f4fa;">Sucursal Principal</span>
<span style="position:absolute;top:86.94px;font-size:10px;line-height:10px;color:#fbfde8;white-space:nowrap;left:885px;transform-origin:0 50%;transform:scaleX(0.989);">A</span>
<span style="position:absolute;top:87.70px;font-size:9.8px;line-height:9.8px;color:#f6f4fa;white-space:nowrap;left:899.6px;transform-origin:0 50%;transform:scaleX(0.991);-webkit-text-stroke:0.2px #f6f4fa;">Administrator (localizacion)</span>
<span style="position:absolute;top:114.89px;font-size:13.6px;line-height:13.6px;color:#7a7d82;white-space:nowrap;left:12px;transform-origin:0 50%;transform:scaleX(0.984);">Monedas</span>
<span style="position:absolute;top:115.07px;font-size:9.6px;line-height:9.6px;color:#d9dbde;white-space:nowrap;left:515px;transform-origin:0 50%;transform:scaleX(0.857);">Buscar...</span>
<span style="position:absolute;top:143.33px;font-size:9.3px;line-height:9.3px;color:#ffffff;white-space:nowrap;font-weight:700;left:19.8px;transform-origin:0 50%;transform:scaleX(0.986);">NUEVO</span>
<span style="position:absolute;top:143.79px;font-size:9.7px;line-height:9.7px;color:#44484e;white-space:nowrap;left:529.4px;transform-origin:0 50%;transform:scaleX(1.024);">Filtros</span>
<span style="position:absolute;top:143.79px;font-size:9.7px;line-height:9.7px;color:#44484e;white-space:nowrap;left:582.6px;transform-origin:0 50%;transform:scaleX(1.056);">Agrupado por</span>
<span style="position:absolute;top:143.79px;font-size:9.7px;line-height:9.7px;color:#44484e;white-space:nowrap;left:670px;transform-origin:0 50%;">Favoritos</span>
<span style="position:absolute;top:143.79px;font-size:9.7px;line-height:9.7px;color:#686c72;white-space:nowrap;left:868px;transform-origin:0 50%;transform:scaleX(1.008);">1-80 / 167</span>
<span style="position:absolute;top:178.87px;font-size:9.6px;line-height:9.6px;color:#33373c;white-space:nowrap;left:33.5px;transform-origin:0 50%;transform:scaleX(1.038);-webkit-text-stroke:0.22px #33373c;">Moneda</span>
<span style="position:absolute;top:178.87px;font-size:9.6px;line-height:9.6px;color:#33373c;white-space:nowrap;left:117.5px;transform-origin:0 50%;transform:scaleX(1.050);-webkit-text-stroke:0.22px #33373c;">Tipo de cambio</span>
<span style="position:absolute;top:178.87px;font-size:9.6px;line-height:9.6px;color:#33373c;white-space:nowrap;left:245px;transform-origin:0 50%;transform:scaleX(1.045);-webkit-text-stroke:0.22px #33373c;">Símbolo</span>
<span style="position:absolute;top:178.87px;font-size:9.6px;line-height:9.6px;color:#33373c;white-space:nowrap;left:328.5px;transform-origin:0 50%;transform:scaleX(1.073);-webkit-text-stroke:0.22px #33373c;">Nombre</span>
<span style="position:absolute;top:178.87px;font-size:9.6px;line-height:9.6px;color:#33373c;white-space:nowrap;left:586px;transform-origin:0 50%;transform:scaleX(1.037);-webkit-text-stroke:0.22px #33373c;">Última actualización</span>
<span style="position:absolute;top:178.87px;font-size:9.6px;line-height:9.6px;color:#33373c;white-space:nowrap;right:207.5px;transform-origin:100% 50%;transform:scaleX(1.050);-webkit-text-stroke:0.22px #33373c;">Tipo de cambio</span>
<span style="position:absolute;top:178.87px;font-size:9.6px;line-height:9.6px;color:#33373c;white-space:nowrap;right:111.39999999999998px;transform-origin:100% 50%;transform:scaleX(0.918);-webkit-text-stroke:0.22px #33373c;">Tasa</span>
<span style="position:absolute;top:178.87px;font-size:9.6px;line-height:9.6px;color:#33373c;white-space:nowrap;left:919px;transform-origin:0 50%;transform:scaleX(1.041);-webkit-text-stroke:0.22px #33373c;">Activo</span>
<span style="position:absolute;top:207.87px;font-size:9.6px;line-height:9.6px;color:#585c62;white-space:nowrap;left:33.2px;transform-origin:0 50%;transform:scaleX(0.861);">PEN</span>
<span style="position:absolute;top:207.87px;font-size:9.6px;line-height:9.6px;color:#585c62;white-space:nowrap;left:245px;transform-origin:0 50%;">S/</span>
<span style="position:absolute;top:207.87px;font-size:9.6px;line-height:9.6px;color:#585c62;white-space:nowrap;left:328.4px;transform-origin:0 50%;transform:scaleX(0.966);">Peruvian sol</span>
<span style="position:absolute;top:207.87px;font-size:9.6px;line-height:9.6px;color:#585c62;white-space:nowrap;right:207px;transform-origin:100% 50%;transform:scaleX(0.933);">1.000</span>
<span style="position:absolute;top:207.87px;font-size:9.6px;line-height:9.6px;color:#585c62;white-space:nowrap;right:110.79999999999995px;transform-origin:100% 50%;transform:scaleX(0.950);">1.000000</span>
<span style="position:absolute;top:233.32px;font-size:9.6px;line-height:9.6px;color:#585c62;white-space:nowrap;left:33.2px;transform-origin:0 50%;transform:scaleX(0.903);">USD</span>
<span style="position:absolute;top:233.32px;font-size:9.6px;line-height:9.6px;color:#585c62;white-space:nowrap;left:117px;transform-origin:0 50%;transform:scaleX(0.978);">Venta</span>
<span style="position:absolute;top:233.32px;font-size:9.6px;line-height:9.6px;color:#585c62;white-space:nowrap;left:245px;transform-origin:0 50%;">$</span>
<span style="position:absolute;top:233.32px;font-size:9.6px;line-height:9.6px;color:#585c62;white-space:nowrap;left:328.4px;transform-origin:0 50%;">United States dollar</span>
<span style="position:absolute;top:233.32px;font-size:9.6px;line-height:9.6px;color:#585c62;white-space:nowrap;left:585px;transform-origin:0 50%;transform:scaleX(1.025);">01/03/2023</span>
<span style="position:absolute;top:233.32px;font-size:9.6px;line-height:9.6px;color:#585c62;white-space:nowrap;right:207px;transform-origin:100% 50%;transform:scaleX(0.933);">3.810</span>
<span style="position:absolute;top:233.32px;font-size:9.6px;line-height:9.6px;color:#585c62;white-space:nowrap;right:110.79999999999995px;transform-origin:100% 50%;transform:scaleX(0.950);">0.262467</span>
<span style="position:absolute;top:258.77px;font-size:9.6px;line-height:9.6px;color:#93969b;white-space:nowrap;left:33.2px;transform-origin:0 50%;transform:scaleX(0.902);">AED</span>
<span style="position:absolute;top:258.77px;font-size:9.6px;line-height:9.6px;color:#93969b;white-space:nowrap;left:117px;transform-origin:0 50%;transform:scaleX(0.976);">Compra</span>
<span style="position:absolute;top:258.77px;font-size:9.6px;line-height:9.6px;color:#93969b;white-space:nowrap;left:245px;transform-origin:0 50%;">د.إ</span>
<span style="position:absolute;top:258.77px;font-size:9.6px;line-height:9.6px;color:#93969b;white-space:nowrap;left:328.4px;transform-origin:0 50%;">United Arab Emirates dirham</span>
<span style="position:absolute;top:258.77px;font-size:9.6px;line-height:9.6px;color:#93969b;white-space:nowrap;right:207px;transform-origin:100% 50%;transform:scaleX(0.933);">1.000</span>
<span style="position:absolute;top:258.77px;font-size:9.6px;line-height:9.6px;color:#93969b;white-space:nowrap;right:110.79999999999995px;transform-origin:100% 50%;transform:scaleX(0.950);">1.000000</span>
<span style="position:absolute;top:284.22px;font-size:9.6px;line-height:9.6px;color:#93969b;white-space:nowrap;left:33.2px;transform-origin:0 50%;transform:scaleX(0.928);">AFN</span>
<span style="position:absolute;top:284.22px;font-size:9.6px;line-height:9.6px;color:#93969b;white-space:nowrap;left:117px;transform-origin:0 50%;transform:scaleX(0.976);">Compra</span>
<span style="position:absolute;top:284.22px;font-size:9.6px;line-height:9.6px;color:#93969b;white-space:nowrap;left:245px;transform-origin:0 50%;">Afs</span>
<span style="position:absolute;top:284.22px;font-size:9.6px;line-height:9.6px;color:#93969b;white-space:nowrap;left:328.4px;transform-origin:0 50%;">Afghan afghani</span>
<span style="position:absolute;top:284.22px;font-size:9.6px;line-height:9.6px;color:#93969b;white-space:nowrap;right:207px;transform-origin:100% 50%;transform:scaleX(0.933);">1.000</span>
<span style="position:absolute;top:284.22px;font-size:9.6px;line-height:9.6px;color:#93969b;white-space:nowrap;right:110.79999999999995px;transform-origin:100% 50%;transform:scaleX(0.950);">1.000000</span>
<span style="position:absolute;top:309.67px;font-size:9.6px;line-height:9.6px;color:#93969b;white-space:nowrap;left:33.2px;transform-origin:0 50%;transform:scaleX(0.861);">ALL</span>
<span style="position:absolute;top:309.67px;font-size:9.6px;line-height:9.6px;color:#93969b;white-space:nowrap;left:117px;transform-origin:0 50%;transform:scaleX(0.976);">Compra</span>
<span style="position:absolute;top:309.67px;font-size:9.6px;line-height:9.6px;color:#93969b;white-space:nowrap;left:245px;transform-origin:0 50%;">L</span>
<span style="position:absolute;top:309.67px;font-size:9.6px;line-height:9.6px;color:#93969b;white-space:nowrap;left:328.4px;transform-origin:0 50%;">Albanian lek</span>
<span style="position:absolute;top:309.67px;font-size:9.6px;line-height:9.6px;color:#93969b;white-space:nowrap;right:207px;transform-origin:100% 50%;transform:scaleX(0.933);">1.000</span>
<span style="position:absolute;top:309.67px;font-size:9.6px;line-height:9.6px;color:#93969b;white-space:nowrap;right:110.79999999999995px;transform-origin:100% 50%;transform:scaleX(0.950);">1.000000</span>
<span style="position:absolute;top:335.12px;font-size:9.6px;line-height:9.6px;color:#93969b;white-space:nowrap;left:33.2px;transform-origin:0 50%;transform:scaleX(0.994);">AMD</span>
<span style="position:absolute;top:335.12px;font-size:9.6px;line-height:9.6px;color:#93969b;white-space:nowrap;left:117px;transform-origin:0 50%;transform:scaleX(0.976);">Compra</span>
<span style="position:absolute;top:335.12px;font-size:9.6px;line-height:9.6px;color:#93969b;white-space:nowrap;left:245px;transform-origin:0 50%;">դր.</span>
<span style="position:absolute;top:335.12px;font-size:9.6px;line-height:9.6px;color:#93969b;white-space:nowrap;left:328.4px;transform-origin:0 50%;">Armenian dram</span>
<span style="position:absolute;top:335.12px;font-size:9.6px;line-height:9.6px;color:#93969b;white-space:nowrap;right:207px;transform-origin:100% 50%;transform:scaleX(0.933);">1.000</span>
<span style="position:absolute;top:335.12px;font-size:9.6px;line-height:9.6px;color:#93969b;white-space:nowrap;right:110.79999999999995px;transform-origin:100% 50%;transform:scaleX(0.950);">1.000000</span>
<span style="position:absolute;top:360.57px;font-size:9.6px;line-height:9.6px;color:#93969b;white-space:nowrap;left:33.2px;transform-origin:0 50%;transform:scaleX(0.952);">ANG</span>
<span style="position:absolute;top:360.57px;font-size:9.6px;line-height:9.6px;color:#93969b;white-space:nowrap;left:117px;transform-origin:0 50%;transform:scaleX(0.976);">Compra</span>
<span style="position:absolute;top:360.57px;font-size:9.6px;line-height:9.6px;color:#93969b;white-space:nowrap;left:245px;transform-origin:0 50%;">ƒ</span>
<span style="position:absolute;top:360.57px;font-size:9.6px;line-height:9.6px;color:#93969b;white-space:nowrap;left:328.4px;transform-origin:0 50%;transform:scaleX(1.025);">Netherlands Antillean guilder</span>
<span style="position:absolute;top:360.57px;font-size:9.6px;line-height:9.6px;color:#93969b;white-space:nowrap;right:207px;transform-origin:100% 50%;transform:scaleX(0.933);">1.000</span>
<span style="position:absolute;top:360.57px;font-size:9.6px;line-height:9.6px;color:#93969b;white-space:nowrap;right:110.79999999999995px;transform-origin:100% 50%;transform:scaleX(0.950);">1.000000</span>
<span style="position:absolute;top:386.02px;font-size:9.6px;line-height:9.6px;color:#93969b;white-space:nowrap;left:33.2px;transform-origin:0 50%;transform:scaleX(0.933);">AOA</span>
<span style="position:absolute;top:386.02px;font-size:9.6px;line-height:9.6px;color:#93969b;white-space:nowrap;left:117px;transform-origin:0 50%;transform:scaleX(0.976);">Compra</span>
<span style="position:absolute;top:386.02px;font-size:9.6px;line-height:9.6px;color:#93969b;white-space:nowrap;left:245px;transform-origin:0 50%;">Kz</span>
<span style="position:absolute;top:386.02px;font-size:9.6px;line-height:9.6px;color:#93969b;white-space:nowrap;left:328.4px;transform-origin:0 50%;">Angolan kwanza</span>
<span style="position:absolute;top:386.02px;font-size:9.6px;line-height:9.6px;color:#93969b;white-space:nowrap;right:207px;transform-origin:100% 50%;transform:scaleX(0.933);">1.000</span>
<span style="position:absolute;top:386.02px;font-size:9.6px;line-height:9.6px;color:#93969b;white-space:nowrap;right:110.79999999999995px;transform-origin:100% 50%;transform:scaleX(0.950);">1.000000</span>
<span style="position:absolute;top:411.47px;font-size:9.6px;line-height:9.6px;color:#93969b;white-space:nowrap;left:33.2px;transform-origin:0 50%;transform:scaleX(0.841);">ARS</span>
<span style="position:absolute;top:411.47px;font-size:9.6px;line-height:9.6px;color:#93969b;white-space:nowrap;left:117px;transform-origin:0 50%;transform:scaleX(0.976);">Compra</span>
<span style="position:absolute;top:411.47px;font-size:9.6px;line-height:9.6px;color:#93969b;white-space:nowrap;left:245px;transform-origin:0 50%;">$</span>
<span style="position:absolute;top:411.47px;font-size:9.6px;line-height:9.6px;color:#93969b;white-space:nowrap;left:328.4px;transform-origin:0 50%;">Argentine peso</span>
<span style="position:absolute;top:411.47px;font-size:9.6px;line-height:9.6px;color:#93969b;white-space:nowrap;right:207px;transform-origin:100% 50%;transform:scaleX(0.933);">1.000</span>
<span style="position:absolute;top:411.47px;font-size:9.6px;line-height:9.6px;color:#93969b;white-space:nowrap;right:110.79999999999995px;transform-origin:100% 50%;transform:scaleX(0.950);">1.000000</span>
<span style="position:absolute;top:436.92px;font-size:9.6px;line-height:9.6px;color:#93969b;white-space:nowrap;left:33.2px;transform-origin:0 50%;transform:scaleX(0.913);">AUD</span>
<span style="position:absolute;top:436.92px;font-size:9.6px;line-height:9.6px;color:#93969b;white-space:nowrap;left:117px;transform-origin:0 50%;transform:scaleX(0.976);">Compra</span>
<span style="position:absolute;top:436.92px;font-size:9.6px;line-height:9.6px;color:#93969b;white-space:nowrap;left:245px;transform-origin:0 50%;">$</span>
<span style="position:absolute;top:436.92px;font-size:9.6px;line-height:9.6px;color:#93969b;white-space:nowrap;left:328.4px;transform-origin:0 50%;">Australian dollar</span>
<span style="position:absolute;top:436.92px;font-size:9.6px;line-height:9.6px;color:#93969b;white-space:nowrap;right:207px;transform-origin:100% 50%;transform:scaleX(0.933);">1.000</span>
<span style="position:absolute;top:436.92px;font-size:9.6px;line-height:9.6px;color:#93969b;white-space:nowrap;right:110.79999999999995px;transform-origin:100% 50%;transform:scaleX(0.950);">1.000000</span>
<span style="position:absolute;top:462.37px;font-size:9.6px;line-height:9.6px;color:#93969b;white-space:nowrap;left:33.2px;transform-origin:0 50%;transform:scaleX(0.926);">AWG</span>
<span style="position:absolute;top:462.37px;font-size:9.6px;line-height:9.6px;color:#93969b;white-space:nowrap;left:117px;transform-origin:0 50%;transform:scaleX(0.976);">Compra</span>
<span style="position:absolute;top:462.37px;font-size:9.6px;line-height:9.6px;color:#93969b;white-space:nowrap;left:245px;transform-origin:0 50%;">Afl.</span>
<span style="position:absolute;top:462.37px;font-size:9.6px;line-height:9.6px;color:#93969b;white-space:nowrap;left:328.4px;transform-origin:0 50%;">Aruban florin</span>
<span style="position:absolute;top:462.37px;font-size:9.6px;line-height:9.6px;color:#93969b;white-space:nowrap;right:207px;transform-origin:100% 50%;transform:scaleX(0.933);">1.000</span>
<span style="position:absolute;top:462.37px;font-size:9.6px;line-height:9.6px;color:#93969b;white-space:nowrap;right:110.79999999999995px;transform-origin:100% 50%;transform:scaleX(0.950);">1.000000</span>
<span style="position:absolute;top:487.82px;font-size:9.6px;line-height:9.6px;color:#93969b;white-space:nowrap;left:33.2px;transform-origin:0 50%;transform:scaleX(0.964);">AZN</span>
<span style="position:absolute;top:487.82px;font-size:9.6px;line-height:9.6px;color:#93969b;white-space:nowrap;left:117px;transform-origin:0 50%;transform:scaleX(0.976);">Compra</span>
<span style="position:absolute;top:487.82px;font-size:9.6px;line-height:9.6px;color:#93969b;white-space:nowrap;left:245px;transform-origin:0 50%;">m</span>
<span style="position:absolute;top:487.82px;font-size:9.6px;line-height:9.6px;color:#93969b;white-space:nowrap;left:328.4px;transform-origin:0 50%;">Azerbaijani manat</span>
<span style="position:absolute;top:487.82px;font-size:9.6px;line-height:9.6px;color:#93969b;white-space:nowrap;right:207px;transform-origin:100% 50%;transform:scaleX(0.933);">1.000</span>
<span style="position:absolute;top:487.82px;font-size:9.6px;line-height:9.6px;color:#93969b;white-space:nowrap;right:110.79999999999995px;transform-origin:100% 50%;transform:scaleX(0.950);">1.000000</span>
<span style="position:absolute;top:513.27px;font-size:9.6px;line-height:9.6px;color:#93969b;white-space:nowrap;left:33.2px;transform-origin:0 50%;transform:scaleX(0.971);">BAM</span>
<span style="position:absolute;top:513.27px;font-size:9.6px;line-height:9.6px;color:#93969b;white-space:nowrap;left:117px;transform-origin:0 50%;transform:scaleX(0.976);">Compra</span>
<span style="position:absolute;top:513.27px;font-size:9.6px;line-height:9.6px;color:#93969b;white-space:nowrap;left:245px;transform-origin:0 50%;">KM</span>
<span style="position:absolute;top:513.27px;font-size:9.6px;line-height:9.6px;color:#93969b;white-space:nowrap;left:328.4px;transform-origin:0 50%;transform:scaleX(1.006);">Bosnia and Herzegovina convertible mark</span>
<span style="position:absolute;top:513.27px;font-size:9.6px;line-height:9.6px;color:#93969b;white-space:nowrap;right:207px;transform-origin:100% 50%;transform:scaleX(0.933);">1.000</span>
<span style="position:absolute;top:513.27px;font-size:9.6px;line-height:9.6px;color:#93969b;white-space:nowrap;right:110.79999999999995px;transform-origin:100% 50%;transform:scaleX(0.950);">1.000000</span>
<span style="position:absolute;top:538.72px;font-size:9.6px;line-height:9.6px;color:#93969b;white-space:nowrap;left:33.2px;transform-origin:0 50%;transform:scaleX(0.907);">BBD</span>
<span style="position:absolute;top:538.72px;font-size:9.6px;line-height:9.6px;color:#93969b;white-space:nowrap;left:117px;transform-origin:0 50%;transform:scaleX(0.976);">Compra</span>
<span style="position:absolute;top:538.72px;font-size:9.6px;line-height:9.6px;color:#93969b;white-space:nowrap;left:245px;transform-origin:0 50%;">Bds$</span>
<span style="position:absolute;top:538.72px;font-size:9.6px;line-height:9.6px;color:#93969b;white-space:nowrap;left:328.4px;transform-origin:0 50%;">Barbados dollar</span>
<span style="position:absolute;top:538.72px;font-size:9.6px;line-height:9.6px;color:#93969b;white-space:nowrap;right:207px;transform-origin:100% 50%;transform:scaleX(0.933);">1.000</span>
<span style="position:absolute;top:538.72px;font-size:9.6px;line-height:9.6px;color:#93969b;white-space:nowrap;right:110.79999999999995px;transform-origin:100% 50%;transform:scaleX(0.950);">1.000000</span>
<span style="position:absolute;top:564.17px;font-size:9.6px;line-height:9.6px;color:#93969b;white-space:nowrap;left:33.2px;transform-origin:0 50%;transform:scaleX(0.855);">BDT</span>
<span style="position:absolute;top:564.17px;font-size:9.6px;line-height:9.6px;color:#93969b;white-space:nowrap;left:117px;transform-origin:0 50%;transform:scaleX(0.976);">Compra</span>
<span style="position:absolute;top:564.17px;font-size:9.6px;line-height:9.6px;color:#93969b;white-space:nowrap;left:245px;transform-origin:0 50%;">৳</span>
<span style="position:absolute;top:564.17px;font-size:9.6px;line-height:9.6px;color:#93969b;white-space:nowrap;left:328.4px;transform-origin:0 50%;">Bangladeshi taka</span>
<span style="position:absolute;top:564.17px;font-size:9.6px;line-height:9.6px;color:#93969b;white-space:nowrap;right:207px;transform-origin:100% 50%;transform:scaleX(0.933);">1.000</span>
<span style="position:absolute;top:564.17px;font-size:9.6px;line-height:9.6px;color:#93969b;white-space:nowrap;right:110.79999999999995px;transform-origin:100% 50%;transform:scaleX(0.950);">1.000000</span>
<div style="position:absolute;left:412px;top:255.8px;width:84.2px;height:19.8px;box-sizing:border-box;background:#fff;border:1px solid #dcdfe2;border-radius:1.5px;box-shadow:0 0.5px 1px rgba(0,0,0,.08);"></div>
<svg style="position:absolute;left:449.6px;top:251.6px;" width="9.6" height="5.4" viewBox="0 0 9.6 5.4"><path d="M0 5L4.8 0.6L9.6 5V5.4H0Z" fill="#fff"/><path d="M0 5L4.8 0.6L9.6 5" stroke="#dcdfe2" stroke-width="1" fill="none"/></svg>
<span style="position:absolute;left:417.4px;top:262.69px;font-size:8.4px;line-height:8.4px;color:#62666c;white-space:nowrap;transform-origin:0 50%;">United States dollar</span>
<svg style="position:absolute;left:0px;top:0px;pointer-events:none;" width="1024" height="575" viewBox="0 0 1024 575"><rect x="6.5" y="224.3" width="966.6" height="26.85" fill="none" stroke="#fbe9c4" stroke-width="3.2" opacity="0.6"/><rect x="6.5" y="224.3" width="966.6" height="26.85" fill="none" stroke="#eea02e" stroke-width="1.8"/></svg>
<svg style="position:absolute;left:497px;top:258px;" width="25" height="54" viewBox="0 0 25 54"><path d="M12.2 0.6L19 12.6H16V26H8.8V12.6H5.6Z" fill="#eea02e"/><circle cx="12.3" cy="40.5" r="12.3" fill="#ef9d22"/></svg>
<span style="position:absolute;left:497px;width:24.6px;text-align:center;top:290.21px;font-size:17px;line-height:17px;color:#1d1a16;-webkit-text-stroke:0.15px #1d1a16;">3</span>
</body></html>
